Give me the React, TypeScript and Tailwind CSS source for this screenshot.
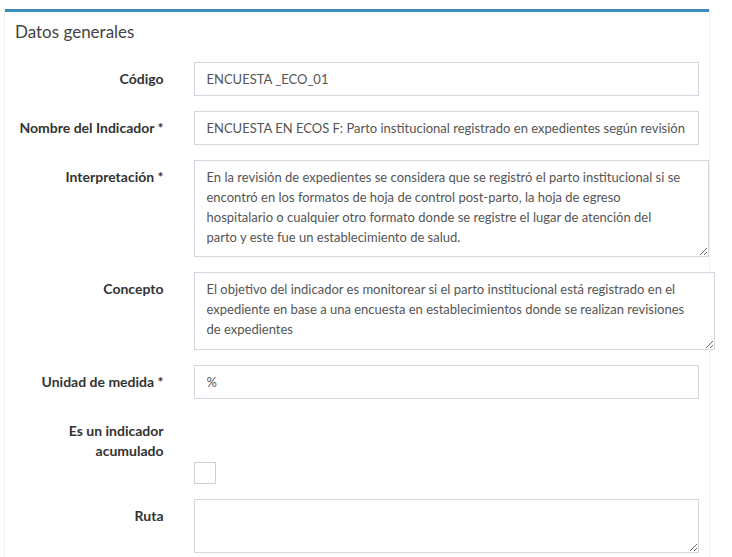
import React from "react";

const font = { fontFamily: "Lato, 'Noto Sans', sans-serif" };

function Label({ children }: { children: React.ReactNode }) {
  return (
    <label className="w-[148.5px] shrink-0 pt-[7px] text-right text-[14px] font-bold leading-[20px] text-[#333]">
      {children}
    </label>
  );
}

const inputCls =
  "h-[34px] min-w-0 flex-1 border border-[#d2d6de] bg-white px-[12px] text-[13px] leading-[20px] text-[#555] outline-none";

const taCls =
  "block shrink-0 resize border border-[#d2d6de] bg-white px-[12px] py-[6px] text-[13px] leading-[20px] text-[#555] outline-none overflow-hidden whitespace-pre";

export default function App() {
  return (
    <div className="min-h-[557px] bg-white pt-[9px]" style={font}>
      <div className="ml-[5px] w-[704px] border-t-[3px] border-[#3c8dbc] bg-white shadow-[-1px_0_0_#eef0f3,1px_0_0_#eef0f3]">
        <div className="px-[10px] py-[10px]">
          <h3 className="text-[17px] leading-[20px] text-[#444]">Datos generales</h3>
        </div>
        <div className="p-[10px]">
          <div className="mb-[15px] flex gap-[30px]">
            <Label>Código</Label>
            <input className={inputCls} readOnly value="ENCUESTA _ECO_01" />
          </div>
          <div className="mb-[15px] flex gap-[30px]">
            <Label>Nombre del Indicador *</Label>
            <input
              className={inputCls}
              readOnly
              value="ENCUESTA EN ECOS F: Parto institucional registrado en expedientes según revisión"
            />
          </div>
          <div className="mb-[15px] flex gap-[30px]">
            <Label>Interpretación *</Label>
            <textarea
              className={taCls + " h-[97px] w-[515px]"}
              readOnly
              value={
                "En la revisión de expedientes se considera que se registró el parto institucional si se\nencontró en los formatos de hoja de control post-parto, la hoja de egreso\nhospitalario o cualquier otro formato donde se registre el lugar de atención del\nparto y este fue un establecimiento de salud."
              }
            />
          </div>
          <div className="mb-[15px] flex gap-[30px]">
            <Label>Concepto</Label>
            <textarea
              className={taCls + " h-[78px] w-[521px]"}
              readOnly
              value={
                "El objetivo del indicador es monitorear si el parto institucional está registrado en el\nexpediente en base a una encuesta en establecimientos donde se realizan revisiones\nde expedientes"
              }
            />
          </div>
          <div className="mb-[15px] flex gap-[30px]">
            <Label>Unidad de medida *</Label>
            <input className={inputCls} readOnly value="%" />
          </div>
          <div className="mb-[15px]">
            <div className="flex gap-[30px]">
              <Label>
                Es un indicador
                <br />
                acumulado
              </Label>
            </div>
            <div className="ml-[178.5px] mt-[1px]">
              <input
                type="checkbox"
                className="block h-[22px] w-[22px] appearance-none border border-[#d3cfca] bg-white"
              />
            </div>
          </div>
          <div className="flex gap-[30px]">
            <Label>Ruta</Label>
            <textarea className={taCls + " h-[54px] min-w-0 flex-1 shrink"} readOnly value="" />
          </div>
        </div>
      </div>
    </div>
  );
}
